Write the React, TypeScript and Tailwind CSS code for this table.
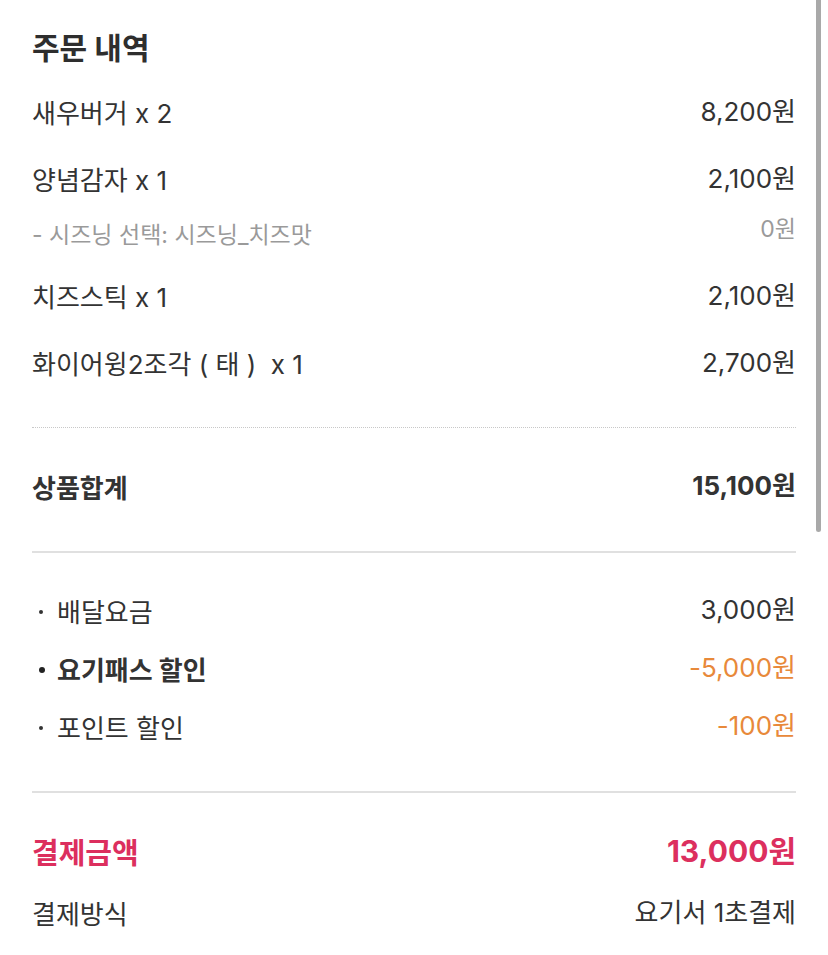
import type { ReactNode } from "react";

type Item = { name: string; price: string; option?: { label: string; price: string } };

const items: Item[] = [
  { name: "새우버거 x 2", price: "8,200원" },
  { name: "양념감자 x 1", price: "2,100원", option: { label: "- 시즈닝 선택: 시즈닝_치즈맛", price: "0원" } },
  { name: "치즈스틱 x 1", price: "2,100원" },
  { name: "화이어윙2조각 ( 태 )  x 1", price: "2,700원" },
];

function Row({ left, right, className }: { left: ReactNode; right: ReactNode; className: string }) {
  return (
    <div className={`flex items-center justify-between ${className}`}>
      <div className="flex items-center">{left}</div>
      <div className="pb-[5px]">{right}</div>
    </div>
  );
}

function Bullet({ bold }: { bold?: boolean }) {
  return (
    <span className="flex w-[25px] items-center pl-[7px]">
      <span className={bold ? "h-[6px] w-[6px] rounded-full bg-[#222]" : "h-[4px] w-[4px] rounded-full bg-[#333]"} />
    </span>
  );
}

export default function App() {
  return (
    <div
      className="relative h-[955px] w-[828px] overflow-hidden bg-white text-[#333]"
      style={{ fontFamily: 'Inter, "Noto Sans CJK KR", "Noto Sans", sans-serif' }}
    >
      <div className="absolute right-[7px] top-0 h-[532px] w-[5px] rounded-b-full bg-[#a9a9a9]" />

      <div className="flex w-[796px] flex-col pl-[32px]">
        <h2 className="mb-[6px] mt-[22px] flex h-[52px] items-center text-[30px] font-bold text-[#2e2e2e]">주문 내역</h2>

        {items.map((item) => (
          <div key={item.name} className="flex flex-col">
            <Row
              className="h-[67px] text-[26px]"
              left={<span className="whitespace-pre">{item.name}</span>}
              right={item.price}
            />
            {item.option && (
              <div className="flex h-[50px] items-start justify-between pt-[6px] text-[23px] leading-[30px] text-[#9a9a9a]">
                <span>{item.option.label}</span>
                <span className="-mt-[6px]">{item.option.price}</span>
              </div>
            )}
          </div>
        ))}

        <div className="mt-[29px] border-t border-dotted border-[#c8c8c8]" />

        <Row
          className="h-[40px] mb-[43px] mt-[40px] text-[26px] font-bold"
          left="상품합계"
          right="15,100원"
        />

        <div className="h-[2px] bg-[#e0e0e0]" />

        <div className="flex flex-col pt-[30px]">
          <Row
            className="h-[58px] text-[26px]"
            left={
              <>
                <Bullet />
                배달요금
              </>
            }
            right="3,000원"
          />
          <Row
            className="h-[58px] text-[26px]"
            left={
              <>
                <Bullet bold />
                <span className="font-bold">요기패스 할인</span>
              </>
            }
            right={<span className="text-[#e8893a]">-5,000원</span>}
          />
          <Row
            className="h-[58px] text-[26px]"
            left={
              <>
                <Bullet />
                포인트 할인
              </>
            }
            right={<span className="text-[#e8893a]">-100원</span>}
          />
        </div>

        <div className="mt-[34px] h-[2px] bg-[#e0e0e0]" />

        <div className="flex flex-col pt-[30px]">
          <Row
            className="h-[61px] text-[29px] font-bold text-[#dc2f5e]"
            left="결제금액"
            right={<span className="text-[30px]">13,000원</span>}
          />
          <Row className="h-[61px] text-[26px]" left="결제방식" right="요기서 1초결제" />
        </div>
      </div>
    </div>
  );
}
